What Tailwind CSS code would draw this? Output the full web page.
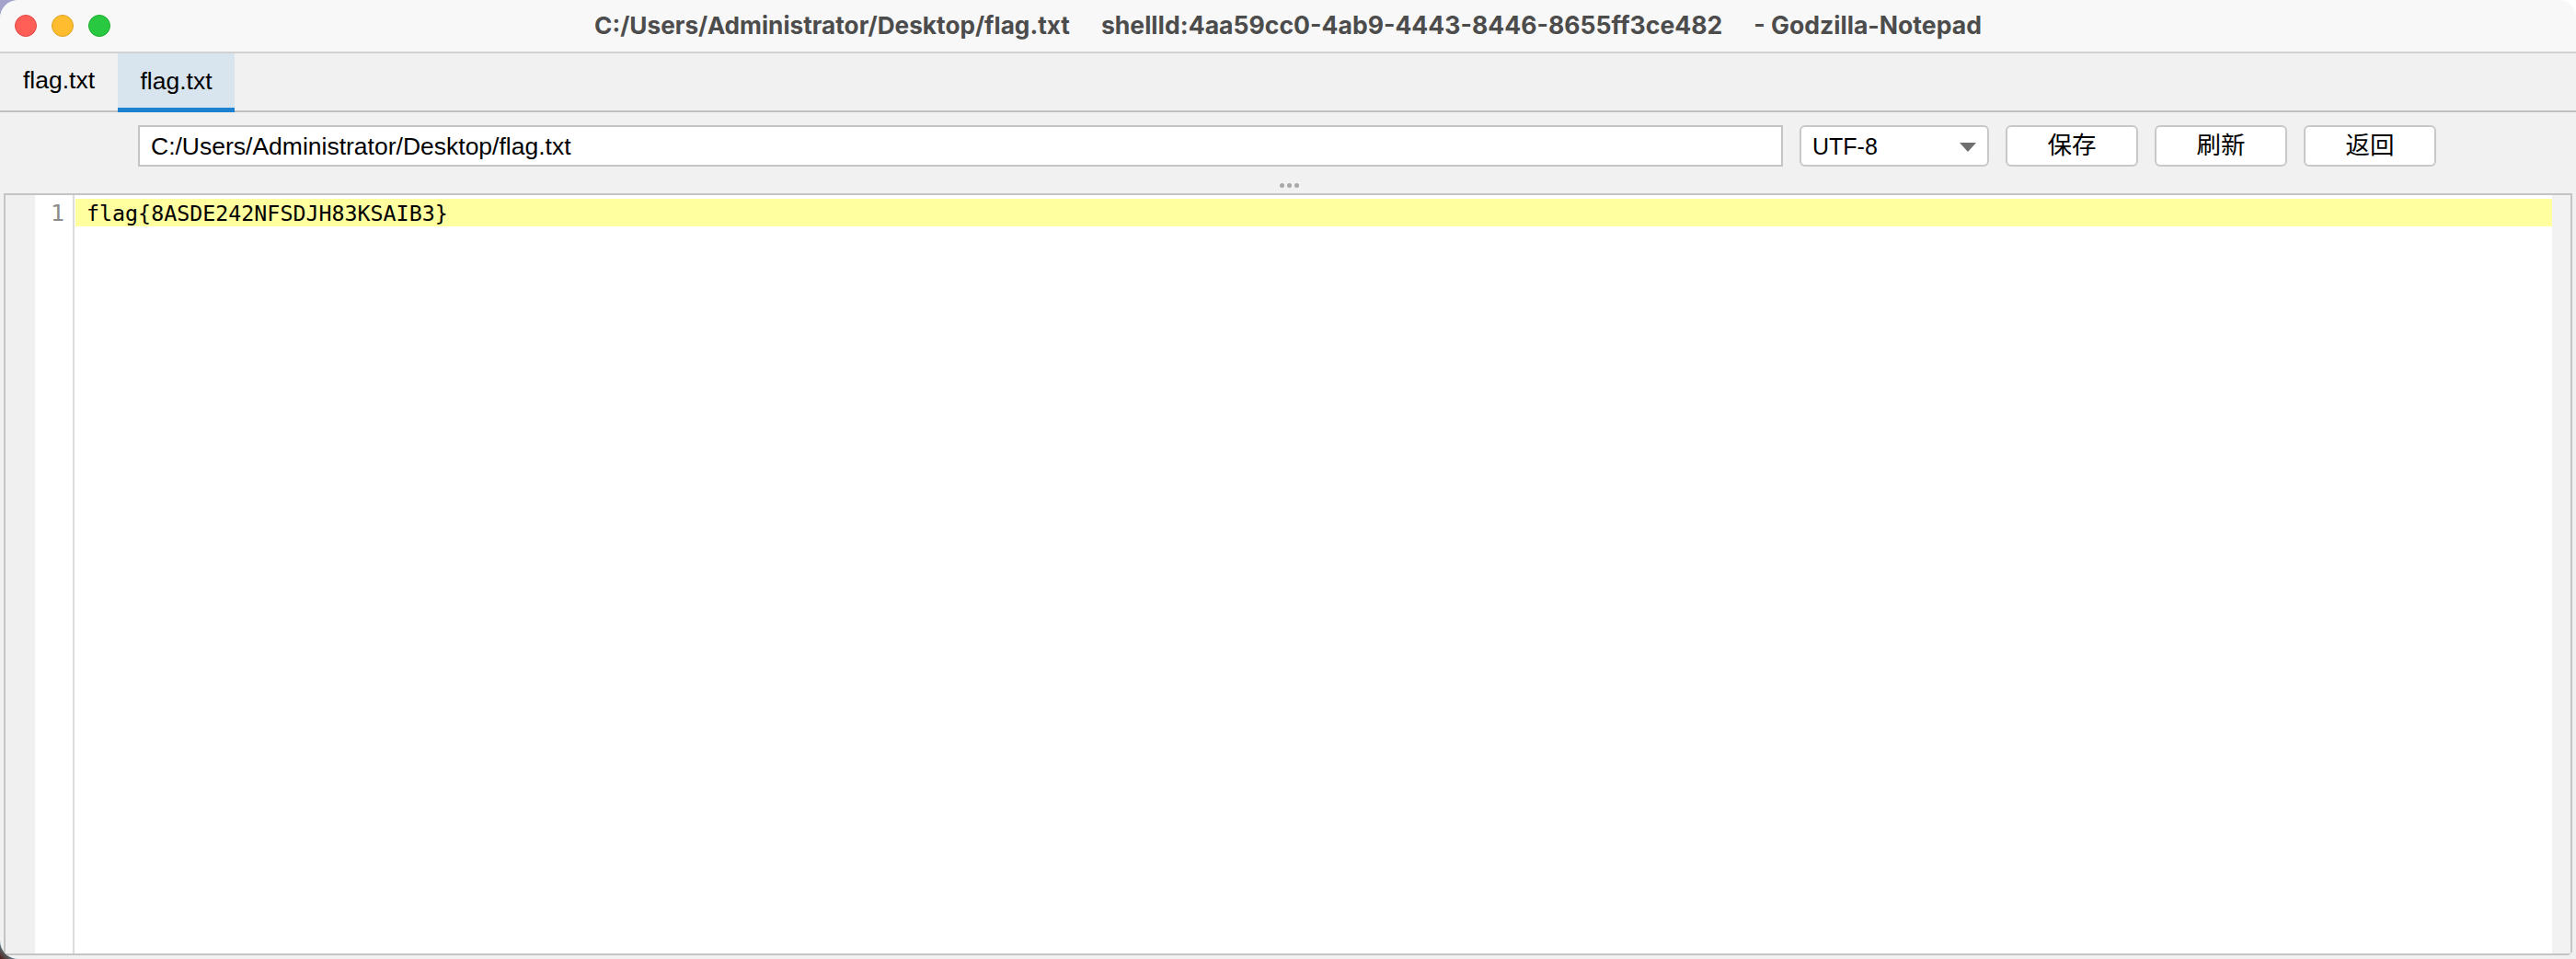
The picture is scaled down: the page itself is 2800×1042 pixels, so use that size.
<!DOCTYPE html>
<html>
<head>
<meta charset="utf-8">
<script src="https://cdn.jsdelivr.net/npm/@tailwindcss/browser@4"></script>
</head>
<body class="bg-[#f0f0f0]">
<div class="relative w-[2800px] h-[1042px] overflow-hidden bg-[#f0f0f0]">
  <div class="absolute left-0 top-0 w-6 h-6 bg-[#a3a3cc]"></div>
  <div class="absolute right-0 top-0 w-6 h-6 bg-white"></div>
  <div class="absolute left-0 bottom-0 w-6 h-6 bg-linear-to-tr from-[#4a1a14] via-[#2fa6bd] to-[#2fa6bd]"></div>
  <div class="relative flex flex-col h-full rounded-[20px] overflow-hidden bg-[#f1f1f1] font-['Liberation_Sans','Noto_Sans_CJK_SC',sans-serif]">
    <header class="relative flex items-center justify-center gap-[34px] h-[58px] shrink-0 bg-[#f8f8f8] border-b-2 border-[#d2d2d2] font-['Inter',sans-serif] text-[26.6px] font-bold text-[#4c4c4c] whitespace-pre">
      <div class="absolute left-[16px] top-[16px] flex gap-[16px]">
        <span class="w-[24px] h-[24px] rounded-full bg-[#ff5f57] border border-[#e14942]"></span>
        <span class="w-[24px] h-[24px] rounded-full bg-[#febc2e] border border-[#dfa023]"></span>
        <span class="w-[24px] h-[24px] rounded-full bg-[#28c840] border border-[#1dad2b]"></span>
      </div>
      <span class="text-[26.2px]">C:/Users/Administrator/Desktop/flag.txt</span>
      <span>shellId:4aa59cc0-4ab9-4443-8446-8655ff3ce482</span>
      <span>- Godzilla-Notepad</span>
    </header>
    <nav class="flex h-[64px] shrink-0 border-b-2 border-[#c0c0c0] text-[26.5px] text-black">
      <div class="flex items-center justify-center w-[128px] pb-[2px]">flag.txt</div>
      <div class="flex items-center justify-center w-[127px] bg-[#d8e4ee] border-b-[5px] border-[#1c82d0] mb-[-2px] pt-[3px]">flag.txt</div>
    </nav>
    <div class="flex items-start h-[88px] shrink-0 pl-[150px] pt-[14px] text-[26.5px] text-black">
      <div class="flex items-center w-[1788px] h-[45px] px-[12px] pt-[2px] bg-white border-2 border-[#c4c4c4]">C:/Users/Administrator/Desktop/flag.txt</div>
      <div class="flex items-center justify-between w-[206px] h-[45px] ml-[18px] pl-[12px] pr-[12px] pt-[2px] bg-white border-2 border-[#c8c8c8] rounded-[6px]">
        <span class="text-[25px]">UTF-8</span>
        <svg width="18" height="12" viewBox="0 0 18 12"><path d="M0 1h18L9 11z" fill="#6e6e6e"/></svg>
      </div>
      <div class="flex items-center justify-center w-[144px] h-[45px] ml-[18px] bg-white border-2 border-[#c8c8c8] rounded-[6px]">保存</div>
      <div class="flex items-center justify-center w-[144px] h-[45px] ml-[18px] bg-white border-2 border-[#c8c8c8] rounded-[6px]">刷新</div>
      <div class="flex items-center justify-center w-[144px] h-[45px] ml-[18px] bg-white border-2 border-[#c8c8c8] rounded-[6px]">返回</div>
    </div>
    <div class="absolute left-[1391px] top-[199px] flex gap-[3px]">
      <span class="w-[5px] h-[5px] rounded-full bg-[#a8a8a8]"></span>
      <span class="w-[5px] h-[5px] rounded-full bg-[#a8a8a8]"></span>
      <span class="w-[5px] h-[5px] rounded-full bg-[#a8a8a8]"></span>
    </div>
    <main class="flex h-[828px] shrink-0 ml-[4px] mr-[4px] border-2 border-[#c4c4c4] bg-white">
      <div class="w-[32px] shrink-0 bg-[#f0f0f0]"></div>
      <div class="w-[43px] shrink-0 pt-[5px] pr-[9px] text-right border-r-2 border-[#dcdcdc] font-['DejaVu_Sans_Mono',monospace] text-[25px] leading-[30px] text-[#8c8c8c]">1</div>
      <div class="flex-1 pt-[4px] pl-[1px]">
        <div class="h-[30px] pl-[12px] bg-[#ffff9f] font-['DejaVu_Sans_Mono',monospace] text-[23.3px] leading-[32px] text-black">flag{8ASDE242NFSDJH83KSAIB3}</div>
      </div>
      <div class="w-[20px] shrink-0 bg-[#f2f2f2]"></div>
    </main>
  </div>
</div>
</body>
</html>
